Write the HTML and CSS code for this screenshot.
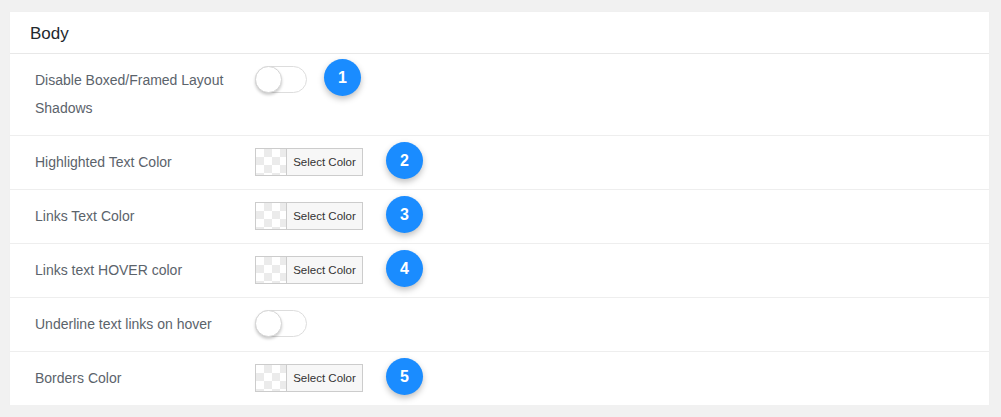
FILE: index.html
```html
<!DOCTYPE html>
<html>
<head>
<meta charset="utf-8">
<link rel="stylesheet" href="styles.css">
</head>
<body>
<div class="panel">
  <div class="panel-head">Body</div>
  <div class="row">
    <div class="label">Disable Boxed/Framed Layout Shadows</div>
    <div class="control">
      <span class="toggle"><span class="knob"></span></span>
      <span class="badge badge-toggle">1</span>
    </div>
  </div>
  <div class="row">
    <div class="label">Highlighted Text Color</div>
    <div class="control">
      <span class="picker"><span class="swatch"></span><span class="pick-btn">Select Color</span></span>
      <span class="badge">2</span>
    </div>
  </div>
  <div class="row">
    <div class="label">Links Text Color</div>
    <div class="control">
      <span class="picker"><span class="swatch"></span><span class="pick-btn">Select Color</span></span>
      <span class="badge">3</span>
    </div>
  </div>
  <div class="row">
    <div class="label">Links text HOVER color</div>
    <div class="control">
      <span class="picker"><span class="swatch"></span><span class="pick-btn">Select Color</span></span>
      <span class="badge">4</span>
    </div>
  </div>
  <div class="row">
    <div class="label">Underline text links on hover</div>
    <div class="control">
      <span class="toggle"><span class="knob"></span></span>
    </div>
  </div>
  <div class="row">
    <div class="label">Borders Color</div>
    <div class="control">
      <span class="picker"><span class="swatch"></span><span class="pick-btn">Select Color</span></span>
      <span class="badge">5</span>
    </div>
  </div>
</div>
</body>
</html>
```

FILE: styles.css
```css
html, body {
  margin: 0;
  padding: 0;
}
body {
  background: #f1f1f1;
  font-family: "Liberation Sans", Arial, sans-serif;
  padding: 12px 12px 0 10px;
  width: 979px;
}
.panel {
  background: #fff;
  box-shadow: 0 0 1px rgba(0,0,0,0.04);
}
.panel-head {
  height: 42px;
  box-sizing: border-box;
  padding: 12px 20px 0 20px;
  font-size: 17px;
  line-height: 20px;
  color: #23282d;
  border-bottom: 1px solid #e8e8e8;
}
.row {
  display: flex;
  padding: 12px 25px 13px 25px;
  border-bottom: 1px solid #eee;
}
.row:last-child {
  border-bottom: none;
}
.label {
  width: 220px;
  flex: none;
  font-size: 14px;
  line-height: 28px;
  color: #5b636b;
  padding-right: 20px;
  box-sizing: border-box;
}
.control {
  display: flex;
  align-items: flex-start;
}
.toggle {
  position: relative;
  display: block;
  width: 52px;
  height: 27px;
  box-sizing: border-box;
  border: 1px solid #ddd;
  border-radius: 14px;
  background: #fff;
}
.knob {
  position: absolute;
  left: -1px;
  top: -1px;
  width: 27px;
  height: 27px;
  box-sizing: border-box;
  border-radius: 50%;
  background: #fff;
  border: 1px solid #d6d6d6;
  box-shadow: 0 2px 3px rgba(0,0,0,0.2);
}
.picker {
  display: flex;
  height: 28px;
  box-sizing: border-box;
  border: 1px solid #ccc;
}
.swatch {
  width: 30px;
  border-right: 1px solid #ccc;
  background-color: #fff;
  background-image:
    linear-gradient(45deg, #ebebeb 25%, transparent 25%, transparent 75%, #ebebeb 75%),
    linear-gradient(45deg, #ebebeb 25%, transparent 25%, transparent 75%, #ebebeb 75%);
  background-size: 16px 16px;
  background-position: 0 0, 8px 8px;
}
.pick-btn {
  width: 75px;
  background: #f7f7f7;
  font-size: 11.5px;
  line-height: 26px;
  color: #333;
  text-align: center;
}
.badge {
  width: 37px;
  height: 37px;
  border-radius: 50%;
  background: #1a8cff;
  color: #fff;
  font-weight: bold;
  font-size: 16px;
  line-height: 37px;
  text-align: center;
  margin: -6px 0 -3px 23px;
  box-shadow: 0 3px 6px rgba(0,0,0,0.25);
}
.badge-toggle {
  margin: -7px 0 -3px 17px;
}
```
